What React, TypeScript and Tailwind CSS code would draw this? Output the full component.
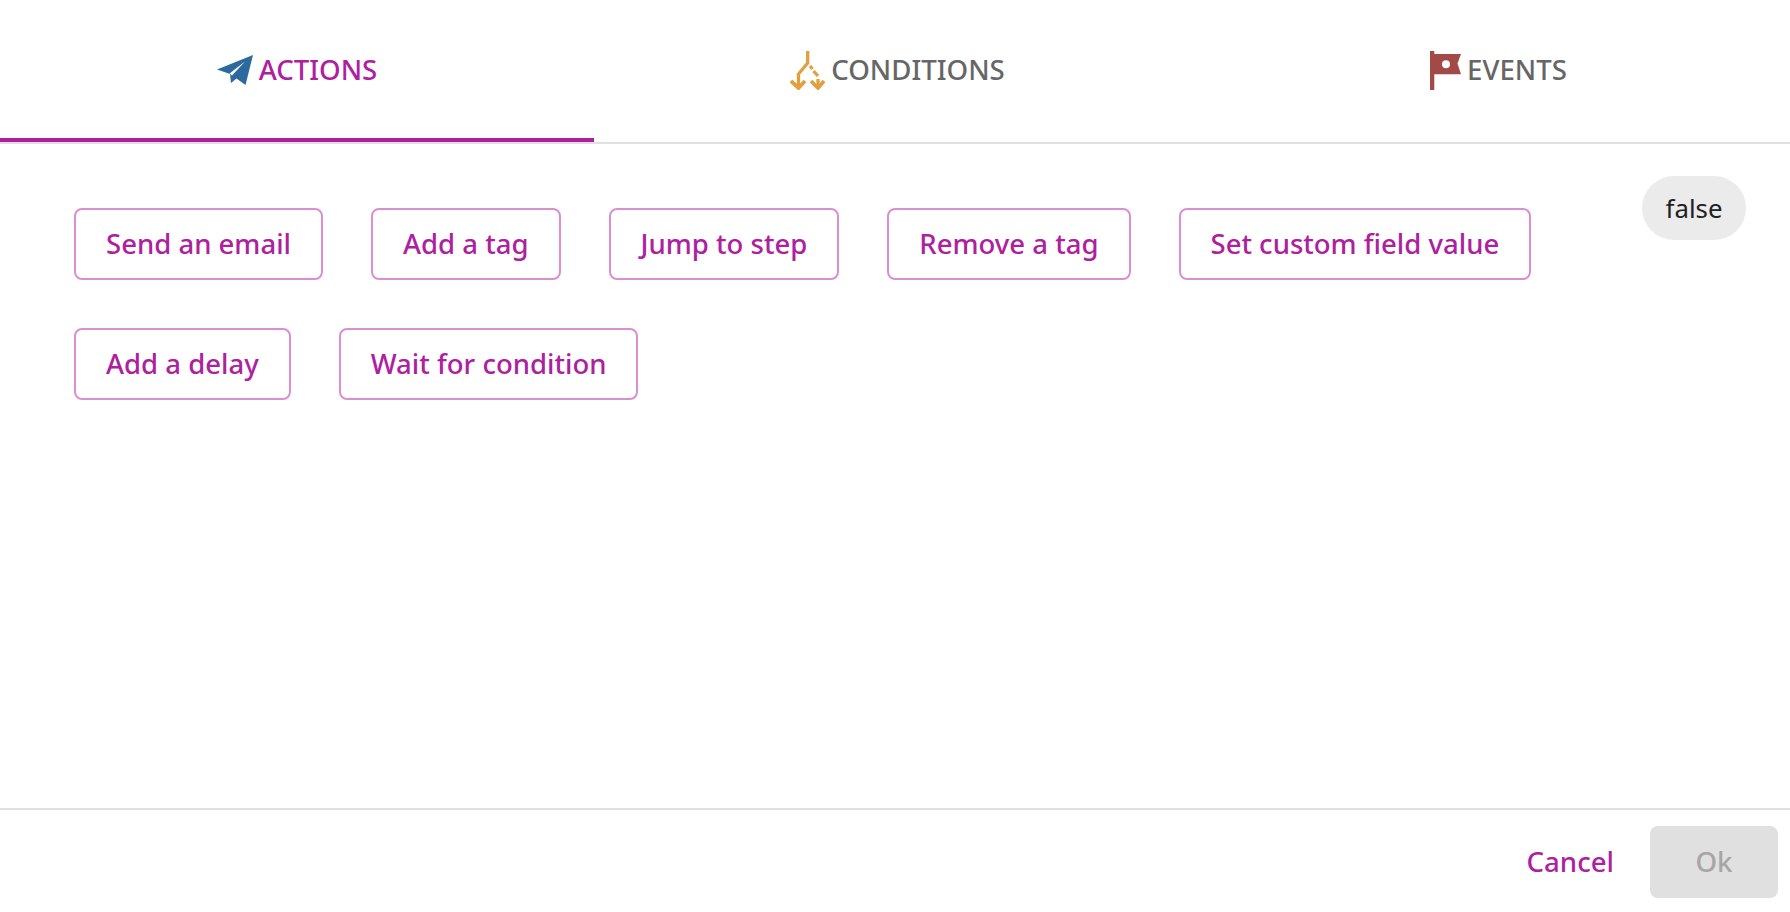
import React from 'react';

const PlaneIcon = () => (
  <svg width="36" height="31" viewBox="0 0 36 31" className="shrink-0">
    <path fill="#2c6a9e" d="M36 0 L0 14.5 L13 19 L14 28 L19.5 23.5 L28.5 30 Z" />
    <path fill="#ffffff" d="M12.5 18.5 L28 6.5 L15 20.5 Z" />
  </svg>
);

const SplitIcon = () => (
  <svg width="35" height="39" viewBox="0 0 35 39" fill="none" className="shrink-0">
    <g stroke="#e0a03f" strokeWidth="3.3">
      <path d="M17.7 0 V12 L8.5 23 V35" />
      <path d="M1 30 L8.5 37 L15 30" strokeWidth="3.8" />
      <path d="M20 15 L22.5 18" />
      <path d="M23.5 20 L28 25" />
      <path d="M28 28 V35" />
      <path d="M21 30 L28 37 L34 30" strokeWidth="3.8" />
    </g>
  </svg>
);

const FlagIcon = () => (
  <svg width="31" height="39" viewBox="0 0 31 39" className="shrink-0">
    <path fill="#a24a48" d="M0 0 H4.3 V3 H31 L27.5 12.5 L31 23.3 H4.3 V39 H0 Z" />
    <circle cx="16" cy="13.3" r="4" fill="#ffffff" />
  </svg>
);

const tabs = [
  { label: 'ACTIONS', icon: <PlaneIcon />, active: true },
  { label: 'CONDITIONS', icon: <SplitIcon />, active: false },
  { label: 'EVENTS', icon: <FlagIcon />, active: false },
];

const actions = [
  'Send an email',
  'Add a tag',
  'Jump to step',
  'Remove a tag',
  'Set custom field value',
  'Add a delay',
  'Wait for condition',
];

export default function App() {
  return (
    <div className="flex h-[912px] w-[1790px] flex-col overflow-hidden bg-white font-['Noto_Sans',sans-serif]">
      <div className="flex h-[144px] shrink-0 gap-[6px] border-b-2 border-[#e0e0e0]">
        {tabs.map((tab) => (
          <div
            key={tab.label}
            className={
              tab.active
                ? 'flex h-[142px] w-[594px] shrink-0 items-center justify-center gap-[6px] border-b-4 border-[#ad219e] pt-[2px] text-[27.6px] font-medium text-[#ad219e]'
                : 'flex h-[142px] w-[595px] shrink-0 items-center justify-center gap-[6px] pb-[2px] text-[27.6px] font-medium text-[#666666]'
            }
          >
            {tab.icon}
            <span>{tab.label}</span>
          </div>
        ))}
      </div>

      <div className="flex min-h-0 flex-1 items-start justify-between pt-[32px] pr-[44px] pl-[74px]">
        <div className="mt-[32px] flex w-[1500px] flex-wrap gap-x-[48px] gap-y-[48px]">
          {actions.map((action) => (
            <button
              key={action}
              className="h-[72px] rounded-[8px] border-2 border-[#db8fd2] bg-white px-[30px] text-[27.53px] font-medium text-[#ad219e]"
            >
              {action}
            </button>
          ))}
        </div>
        <div className="flex h-[64px] w-[104px] items-center justify-center rounded-full bg-[#ebebeb] text-[25.8px] text-[#212121]">
          false
        </div>
      </div>

      <div className="flex h-[104px] shrink-0 items-center justify-end gap-[36px] border-t-2 border-[#e0e0e0] pt-[2px] pr-[12px]">
        <button className="text-[27.6px] font-medium text-[#ad219e]">Cancel</button>
        <button className="h-[72px] w-[128px] rounded-[8px] bg-[#e0e0e0] text-[27.6px] font-medium text-[#a6a6a6]">
          Ok
        </button>
      </div>
    </div>
  );
}
